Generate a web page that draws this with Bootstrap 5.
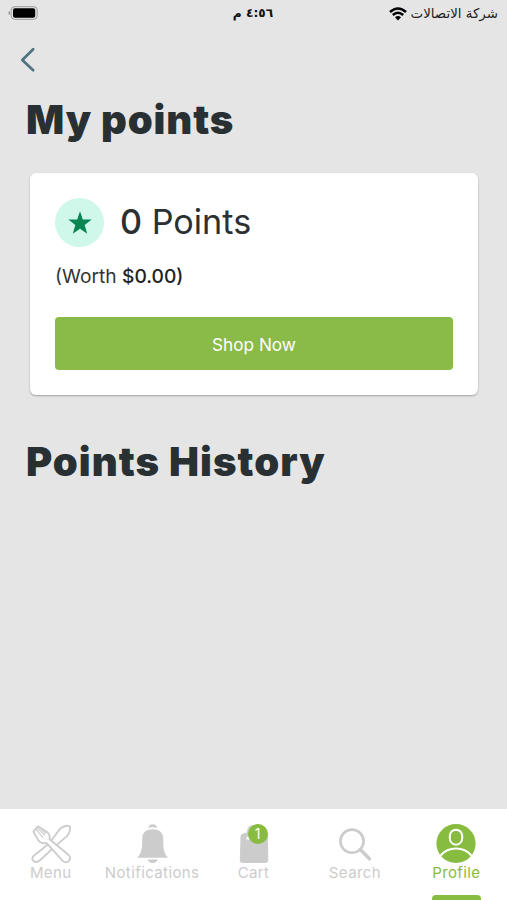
<!DOCTYPE html>
<html lang="en">
<head>
<meta charset="utf-8">
<meta name="viewport" content="width=device-width, initial-scale=1">
<title>My points</title>
<link href="https://cdn.jsdelivr.net/npm/bootstrap@5.3.0/dist/css/bootstrap.min.css" rel="stylesheet">
<style>
body{background:#e5e5e5;color:#2b3033;font-family:Inter,"Liberation Sans",sans-serif;height:900px;overflow:hidden}
.status{height:28px;padding:0 9px 0 8px;color:#111;font-family:"DejaVu Sans",sans-serif;font-size:12.2px;line-height:27px}
.status>div{flex:1 1 0}
.battery{margin-top:6px}
.carrier{font-size:13.4px;line-height:26px;color:#222}
.back{height:64px;padding:19px 0 0 20px}
.title{font-weight:900;font-size:40px;line-height:48px;margin:0 0 0 26px;color:#293033;white-space:nowrap}
.t-one{letter-spacing:.9px;margin-top:4px}
.t-two{letter-spacing:1.03px;margin-top:43px}
.points{margin:29px 29px 0 30px;height:222px;padding:25px 25px 0;border-radius:6px;box-shadow:0 1px 2px rgba(0,0,0,.3)}
.star{width:49px;height:49px;background:#cff8ea}
.amount{font-size:34.2px;line-height:48px;margin-left:16px;white-space:nowrap}
.amount b,.worth b{font-weight:500}
.worth{font-size:19.2px;line-height:24px;margin-top:17px;color:#222}
.worth span{color:#333}
.shop{margin-top:29px;height:53px;font-size:17.2px;background:#8aba48;border:0;border-radius:4px;color:#fff}
.shop span{display:block;padding-top:3px}
.tabs{height:91px;background:#fff;color:#ccc}
.tab{flex:1 1 0;padding-top:15px;font-size:15px;letter-spacing:.4px;line-height:18px;white-space:nowrap;color:inherit}
.tab svg{display:block;width:42px;height:40px;overflow:visible}
.tab.on{color:#87bc40}
.count{position:absolute;left:15px;top:0;width:20px;height:20px;background:#87bc40;color:#fff;font-size:14px;line-height:20px;letter-spacing:0}
.ind{width:49px;height:5px;margin-top:13px;border-radius:4px 4px 0 0;background:#87bc40}
</style>
</head>
<body class="d-flex flex-column">
<header class="status d-flex flex-shrink-0">
  <div><svg class="battery d-block" width="30" height="14" viewBox="0 0 30 14"><path d="M2 5Q.3 5.3.3 7T2 9Z" fill="#999"/><rect x="3.2" y=".7" width="26" height="12.6" rx="3.5" fill="none" stroke="#999"/><rect x="5" y="2.3" width="22.2" height="9.4" rx="2" fill="#000"/></svg></div>
  <div class="text-center fw-bold" dir="rtl">٤:٥٦ م</div>
  <div class="d-flex justify-content-end align-items-center"><svg width="18" height="14" viewBox="0 0 18 14" class="me-1 flex-shrink-0"><path d="M1 5Q9-2 17 5M3.8 8Q9 3.6 14.2 8" fill="none" stroke="#000" stroke-width="2.5"/><path d="M6 10.2Q9 7.8 12 10.2L9 13.4Z"/></svg><span class="carrier text-nowrap" dir="rtl">شركة الاتصالات</span></div>
</header>
<nav class="back flex-shrink-0"><svg class="d-block" width="16" height="26" viewBox="0 0 16 26"><path d="M13.2 2.2 2.3 13 13.2 23.2" fill="none" stroke="#4f7380" stroke-width="2.7" stroke-linecap="round" stroke-linejoin="round"/></svg></nav>
<main class="flex-grow-1">
  <h1 class="title t-one">My points</h1>
  <section class="points bg-white">
    <div class="d-flex">
      <div class="star rounded-circle d-flex align-items-center justify-content-center"><svg width="24" height="24" viewBox="0 0 24 24"><path d="M12 .2 14.8 8.4 23.7 8.6 16.7 14 19.2 22.8 12 17.8 4.8 22.8 7.3 14 .3 8.6 9.2 8.4Z" fill="#078653"/></svg></div>
      <div class="amount"><b>0</b> Points</div>
    </div>
    <div class="worth"><span>(Worth</span> <b>$0.00)</b></div>
    <button class="btn shop w-100 p-0" type="button"><span>Shop Now</span></button>
  </section>
  <h2 class="title t-two">Points History</h2>
</main>
<footer class="tabs d-flex flex-shrink-0">
  <a class="tab d-flex flex-column align-items-center text-decoration-none"><svg viewBox="-1.5 -.5 44 41" fill="#fff" stroke="#ccc" stroke-width="1.9" stroke-linejoin="round"><path d="M18 20 30 4Q36-.5 40 1.5 42 6 37 12L24 23 9 37Q5 40.5 2 37.5T4 31Z"/><path d="M2 7 7 1.5 17 8Q20 11 19 15L39 31.5Q42 35 39 38T32 37L16 19Q10 20 7 16Z"/><path d="M4 4 12 13M5.5 2.5 14 11M7 1.5 15 9" fill="none" stroke-width="1.2"/></svg>Menu</a>
  <a class="tab d-flex flex-column align-items-center text-decoration-none"><svg viewBox="-.7 0 42 40" fill="#ccc"><path d="M16.5 4Q17 .2 21 .2T25.5 4Q21 2.7 16.5 4ZM10.5 15Q10.5 5.3 21 5.3T31.5 15C31.5 24 32 29.5 36.5 33.8H5.5C10 29.5 10.5 24 10.5 15ZM16 35.6H26Q25 39 21 39T16 35.6Z"/></svg>Notifications</a>
  <a class="tab d-flex flex-column align-items-center text-decoration-none"><span class="position-relative"><svg viewBox="0 0 42 40"><path d="M7.5 12Q8 9.6 10.5 9.4L12 8.8H31Q34.7 9 34.8 12L35.3 36Q35.3 39 32 39H10Q6.8 39 6.8 36Z" fill="#ccc"/><path d="M15 14V8Q15 2 21 2T27 8V14" fill="none" stroke="#ccc" stroke-width="2"/><circle cx="15" cy="14.2" r="1.6" fill="#fff"/></svg><span class="count rounded-circle text-center">1</span></span>Cart</a>
  <a class="tab d-flex flex-column align-items-center text-decoration-none"><svg viewBox="0 0 42 40" fill="none" stroke="#ccc" stroke-width="2.6"><circle cx="18" cy="17.2" r="11.6"/><path d="M26.2 25.4 35.4 34.8" stroke-width="3.5" stroke-linecap="round"/></svg>Search</a>
  <a class="tab on d-flex flex-column align-items-center text-decoration-none"><svg viewBox="0 0 42 40"><circle cx="21" cy="19.5" r="19.6" fill="#87bc40"/><rect x="14.8" y="5.7" width="12.4" height="15" rx="6.2" fill="none" stroke="#fff" stroke-width="2"/><path d="M5.5 31.6Q11.5 24.5 21 24.5T36.5 31.6" fill="none" stroke="#fff" stroke-width="2"/></svg>Profile<span class="ind"></span></a>
</footer>
<script src="https://cdn.jsdelivr.net/npm/bootstrap@5.3.0/dist/js/bootstrap.bundle.min.js"></script>
</body>
</html>
